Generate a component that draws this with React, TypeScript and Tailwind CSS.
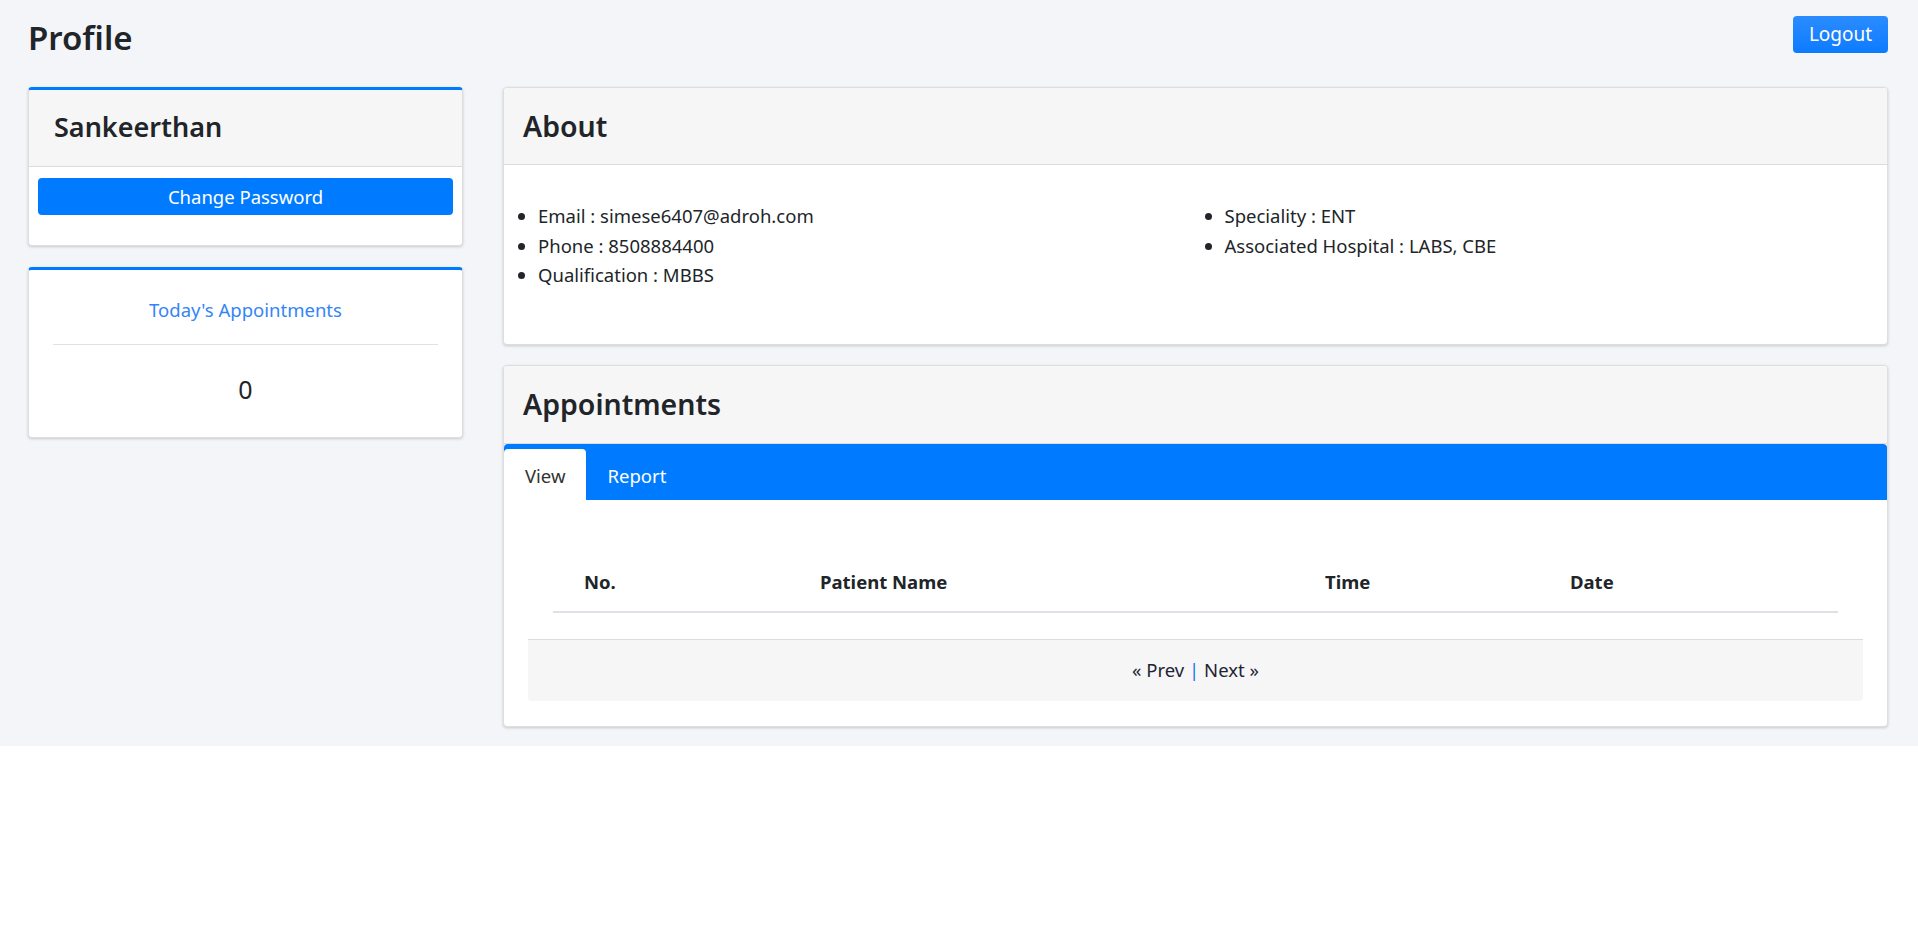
import React, { useState } from "react";

type Info = { label: string; value: string };

const LEFT_INFO: Info[] = [
  { label: "Email", value: "simese6407@adroh.com" },
  { label: "Phone", value: "8508884400" },
  { label: "Qualification", value: "MBBS" },
];

const RIGHT_INFO: Info[] = [
  { label: "Speciality", value: "ENT" },
  { label: "Associated Hospital", value: "LABS, CBE" },
];

const COLUMNS = ["No.", "Patient Name", "Time", "Date"];

const font = "font-['Noto_Sans',sans-serif]";

const InfoList = ({ items }: { items: Info[] }) => (
  <ul className="list-disc pl-[29px] text-[18.5px] leading-[29.5px] text-[#212529]">
    {items.map((item) => (
      <li key={item.label}>
        {item.label} : {item.value}
      </li>
    ))}
  </ul>
);

const CardHeader = ({ title, tall }: { title: string; tall?: boolean }) => (
  <div
    className={`flex items-center border-b border-[#dcdcdc] bg-[#f6f6f6] px-[19px] ${
      tall ? "h-[78px]" : "h-[77px]"
    }`}
  >
    <h3 className="text-[28.5px] font-semibold leading-none text-[#212529]">{title}</h3>
  </div>
);

export default function App() {
  const [tab, setTab] = useState<"view" | "report">("view");

  return (
    <div className={`${font} bg-white`}>
      <div className="bg-[#f4f5f9] pb-[19px] pl-[28px] pr-[30px] pt-[15px]">
        {/* top bar */}
        <div className="flex h-[57px] items-start justify-between">
          <h1 className="mt-[3px] text-[33px] font-semibold leading-[1.2] text-[#212529]">Profile</h1>
          <button className="mt-[1px] h-[37px] w-[95px] rounded-[4px] bg-gradient-to-b from-[#2a8cff] to-[#0a7bff] text-[19px] text-white">
            Logout
          </button>
        </div>

        <div className="mt-[15px] grid grid-cols-[435px_1fr] gap-[40px]">
          {/* left column */}
          <div className="flex flex-col gap-[21px]">
            <div className="overflow-hidden rounded-[4px] border-x border-b border-t-[3px] border-x-[#dedede] border-b-[#dedede] border-t-[#007bff] bg-white shadow-[0_1px_3px_rgba(0,0,0,0.18)]">
              <div className="flex h-[77px] items-center border-b border-[#dcdcdc] bg-[#f6f6f6] px-[25px] pb-[3px]">
                <h3 className="text-[27px] font-semibold leading-none text-[#212529]">Sankeerthan</h3>
              </div>
              <div className="px-[9px] pb-[30px] pt-[11px]">
                <button className="h-[37px] w-full rounded-[4px] bg-[#007bff] text-[18.5px] text-white">
                  Change Password
                </button>
              </div>
            </div>

            <div className="rounded-[4px] border-x border-b border-t-[3px] border-x-[#dedede] border-b-[#dedede] border-t-[#007bff] bg-white px-[24px] pb-[32px] pt-[27px] text-center shadow-[0_1px_3px_rgba(0,0,0,0.18)]">
              <div className="text-[18.5px] leading-[26px] text-[#3385f7]">Today's Appointments</div>
              <hr className="mt-[21px] border-[#e2e2e2]" />
              <div className="mt-[28px] text-[25px] leading-[32px] text-[#212529]">0</div>
            </div>
          </div>

          {/* right column */}
          <div className="flex flex-col gap-[20px]">
            <div className="overflow-hidden rounded-[4px] border border-[#dedede] bg-white shadow-[0_1px_3px_rgba(0,0,0,0.18)]">
              <CardHeader title="About" />
              <div className="grid grid-cols-2 px-[5px] pb-[54px] pt-[36px]">
                <InfoList items={LEFT_INFO} />
                <InfoList items={RIGHT_INFO} />
              </div>
            </div>

            <div className="overflow-hidden rounded-[4px] border border-[#dedede] bg-white shadow-[0_1px_3px_rgba(0,0,0,0.18)]">
              <CardHeader title="Appointments" tall />
              <div className="flex h-[56px] items-end rounded-t-[4px] bg-[#007bff]">
                <button
                  onClick={() => setTab("view")}
                  className={`h-[51px] rounded-t-[4px] px-[21px] pt-[3px] text-[18.5px] ${
                    tab === "view" ? "bg-white text-[#333]" : "text-white"
                  }`}
                >
                  View
                </button>
                <button
                  onClick={() => setTab("report")}
                  className={`h-[51px] rounded-t-[4px] px-[21px] pt-[3px] text-[18.5px] ${
                    tab === "report" ? "bg-white text-[#333]" : "text-white"
                  }`}
                >
                  Report
                </button>
              </div>

              <div className="px-[24px] pb-[25px]">
                <div className="mx-[25px] mt-[69px] grid grid-cols-[236px_505px_245px_1fr] border-b-2 border-[#dee2e6] pb-[17px]">
                  {COLUMNS.map((c) => (
                    <div key={c} className="pl-[31px] text-[18.5px] font-bold leading-[25px] text-[#212529]">
                      {c}
                    </div>
                  ))}
                </div>
                <div className="mt-[26px] flex h-[62px] items-center justify-center whitespace-pre rounded-b-[4px] border-t border-[#dcdcdc] bg-[#f6f6f6] text-[18.5px] text-[#1d2435]">
                  <span>« Prev </span>
                  <span className="text-[#1877e8]">|</span>
                  <span> Next »</span>
                </div>
              </div>
            </div>
          </div>
        </div>
      </div>
    </div>
  );
}
